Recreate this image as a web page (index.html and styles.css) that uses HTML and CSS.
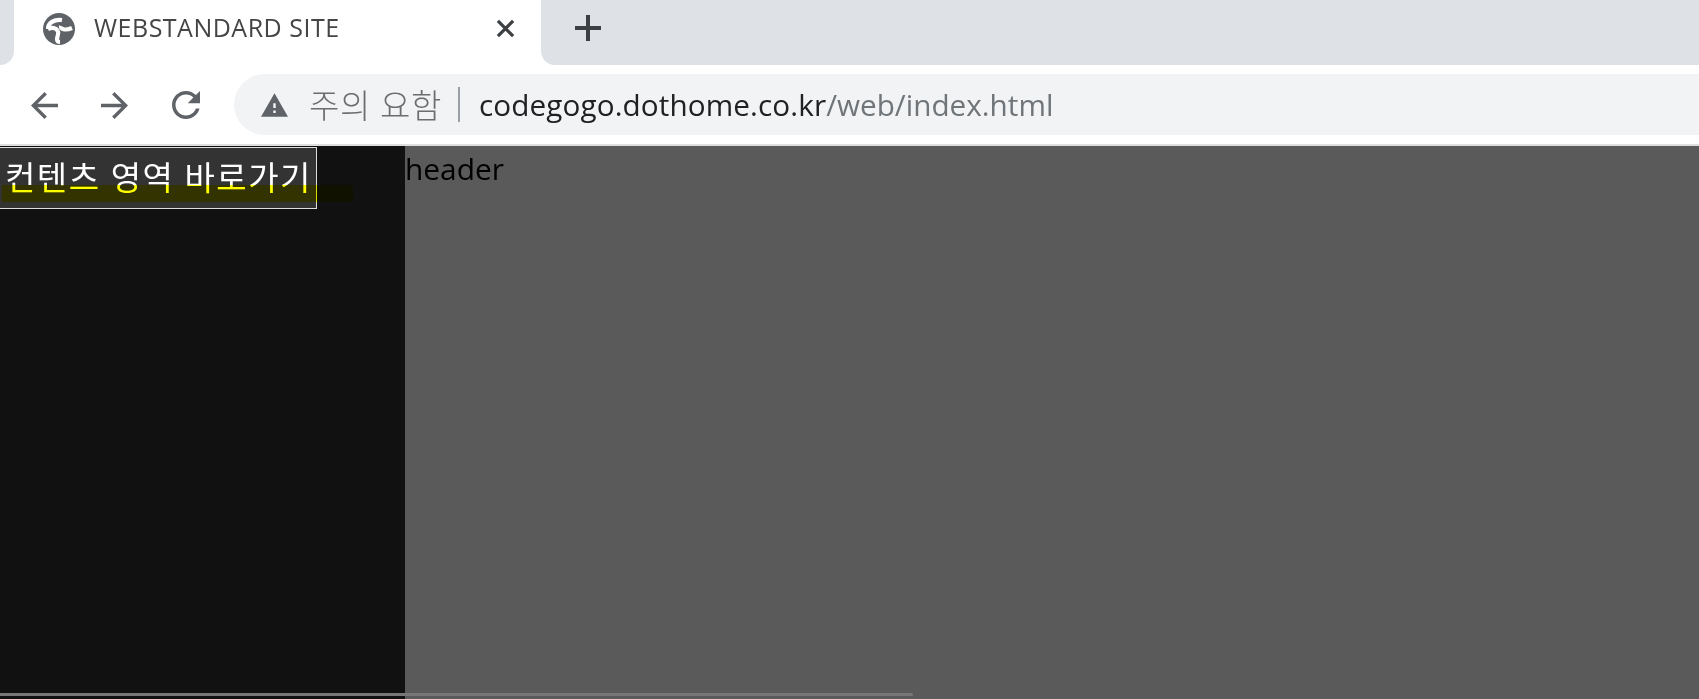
FILE: index.html
```html
<!DOCTYPE html>
<html lang="ko">
<head>
<meta charset="utf-8">
<title>WEBSTANDARD SITE</title>
<link rel="stylesheet" href="styles.css">
</head>
<body>
<div class="tabstrip">
  <div class="strip-edge"></div>
  <div class="tab">
    <svg class="favicon" viewBox="0 0 32 32"><circle cx="16" cy="16" r="16" fill="#5f6368"/><path d="M5 16C5 10 11 6 19 7M5 16c4-2 8-1 10 2M18 13c-1 3 4 5 11 2M15 18c1 3-1 6-1 8 0 2 1 3 3 3" fill="none" stroke="#fff" stroke-width="4.2"/></svg>
    <span class="tab-title">WEBSTANDARD SITE</span>
    <svg class="tab-close" viewBox="0 0 20 20"><path d="M2 2l16 16M18 2L2 18" stroke="#3c4043" stroke-width="3.4" fill="none"/></svg>
  </div>
  <div class="strip-rest">
    <svg class="new-tab" viewBox="0 0 26 26"><path d="M13 0v26M0 13h26" stroke="#3c4043" stroke-width="4" fill="none"/></svg>
  </div>
</div>
<div class="toolbar">
  <div class="nav-icons">
    <svg class="nav-icon" viewBox="4 4 16 16"><path d="M20 11H7.83l5.59-5.59L12 4l-8 8 8 8 1.41-1.41L7.83 13H20v-2z"/></svg>
    <svg class="nav-icon" viewBox="4 4 16 16"><path d="M4 11h12.17l-5.59-5.59L12 4l8 8-8 8-1.41-1.41L16.17 13H4v-2z"/></svg>
    <svg class="nav-icon reload" viewBox="4 4 16 16"><path d="M17.65 6.35C16.2 4.9 14.21 4 12 4c-4.42 0-7.99 3.58-7.99 8s3.57 8 7.99 8c3.73 0 6.84-2.55 7.73-6h-2.08c-.82 2.33-3.04 4-5.65 4-3.31 0-6-2.69-6-6s2.69-6 6-6c1.66 0 3.14.69 4.22 1.78L13 11h7V4l-2.35 2.35z"/></svg>
  </div>
  <div class="omnibox">
    <svg class="warn" viewBox="1 2 22 19"><path d="M1 21h22L12 2 1 21zm12-3h-2v-2h2v2zm0-4h-2v-4h2v4z"/></svg>
    <span class="warn-text">주의 요함</span>
    <span class="sep"></span>
    <span class="url"><span class="host">codegogo.dothome.co.kr</span>/web/index.html</span>
  </div>
</div>
<div class="rule"></div>
<main class="page">
  <div class="side"></div>
  <header class="content">header</header>
  <a class="skip" href="#content">컨텐츠 영역 바로가기</a>
  <div class="band"></div>
  <div class="hscroll"></div>
</main>
</body>
</html>
```
FILE: styles.css
```css
html, body {
  margin: 0;
  height: 100%;
  overflow: hidden;
  background: #fff;
}
body {
  display: flex;
  flex-direction: column;
  font-family: "Open Sans", "Noto Sans CJK KR", sans-serif;
}
.tabstrip {
  display: flex;
  height: 65px;
  flex: none;
}
.strip-edge {
  width: 14px;
  background: #dee1e6;
  border-bottom-right-radius: 14px;
}
.tab {
  width: 527px;
  display: flex;
  align-items: center;
  padding: 0 26px 0 29px;
  box-sizing: border-box;
  border-radius: 14px 14px 0 0;
}
.favicon {
  width: 32px;
  height: 32px;
  margin-top: -8px;
}
.tab-title {
  flex: 1;
  margin-left: 19px;
  margin-top: -12px;
  font-size: 25px;
  letter-spacing: 0.5px;
  color: #454545;
  white-space: nowrap;
}
.tab-close {
  width: 19px;
  height: 19px;
  margin-top: -8px;
}
.strip-rest {
  flex: 1;
  display: flex;
  align-items: center;
  background: #dee1e6;
  border-bottom-left-radius: 14px;
  padding-left: 34px;
}
.new-tab {
  width: 26px;
  height: 26px;
  margin-top: -10px;
}
.toolbar {
  display: flex;
  align-items: flex-start;
  height: 79px;
  flex: none;
  padding-top: 9px;
  box-sizing: border-box;
}
.nav-icons {
  display: flex;
  align-items: center;
  width: 234px;
  padding: 17px 0 0 31px;
  box-sizing: border-box;
  gap: 43px;
}
.nav-icon {
  width: 27px;
  height: 27px;
  fill: #5f6368;
}
.reload {
  width: 30px;
  height: 28px;
}
.omnibox {
  flex: 1;
  height: 61px;
  display: flex;
  align-items: center;
  background: #f1f3f4;
  border-radius: 31px 0 0 31px;
  padding-left: 27px;
}
.warn {
  width: 27px;
  height: 24px;
  fill: #5f6368;
}
.warn-text {
  margin-left: 21px;
  margin-top: -2px;
  font-size: 33px;
  letter-spacing: 0.6px;
  color: #6d6d6d;
  white-space: nowrap;
  font-weight: 300;
}
.sep {
  width: 2px;
  height: 35px;
  margin: 0 19px 0 16px;
  background: #9aa0a6;
}
.url {
  font-size: 29.7px;
  color: #70757a;
  white-space: nowrap;
}
.host {
  letter-spacing: 0.1px;
  color: #202124;
}
.rule {
  height: 2px;
  flex: none;
  background: #dfdfdf;
}
.page {
  position: relative;
  flex: 1;
  display: flex;
  background: #5a5a5a;
}
.side {
  width: 405px;
  background: #111;
}
.content {
  flex: 1;
  font-size: 29.9px;
  line-height: 46px;
  color: #000;
}
.skip {
  position: absolute;
  left: -1px;
  top: 1px;
  width: 318px;
  height: 62px;
  box-sizing: border-box;
  padding-left: 5px;
  border: 1px solid #ddd;
  background: #333;
  color: #fff;
  font-size: 33px;
  letter-spacing: 1.5px;
  line-height: 60px;
  text-decoration: none;
  white-space: nowrap;
}
.band {
  position: absolute;
  left: 2px;
  top: 39px;
  width: 351px;
  height: 17px;
  background: #ff0;
  mix-blend-mode: multiply;
}
.hscroll {
  position: absolute;
  left: 0;
  bottom: 3px;
  width: 913px;
  height: 3px;
  border-radius: 0 2px 2px 0;
  background: #777;
}
```
